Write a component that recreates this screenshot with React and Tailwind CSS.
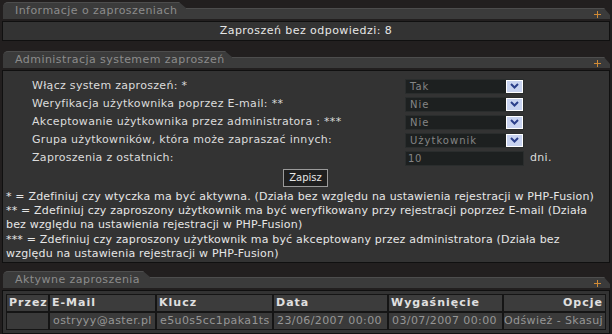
import React from "react";

function Header({ title, tabW }) {
  return (
    <div className="flex items-end h-[17px] ml-[3px] mr-[2px]">
      <div
        className="h-[17px] shrink-0 whitespace-nowrap overflow-hidden bg-[#3b3b3b] rounded-tl-[5px] border-t border-[#4d4d4d] pl-[12px] text-[11px] leading-[15px] text-[#8c8c8c] tracking-[0.45px] [clip-path:polygon(0_0,calc(100%-7px)_0,100%_6px,100%_100%,0_100%)]"
        style={{ width: tabW }}
      >
        {title}
      </div>
      <div className="flex-1 h-[11px] bg-[#3b3b3b] border-t border-[#4d4d4d] flex items-center justify-end pr-[9px] [clip-path:polygon(0_0,calc(100%-6px)_0,100%_7px,100%_100%,0_100%)]">
        <svg width="7" height="7" viewBox="0 0 7 7">
          <path d="M3.5 0 V7 M0 3.5 H7" stroke="#d08a35" strokeWidth="1" />
        </svg>
      </div>
    </div>
  );
}

function Select({ value }) {
  return (
    <div className="flex h-[15px] w-[119px] bg-[#1d2020] border border-[#2a2d2d]">
      <div className="flex-1 text-[10px] leading-[13px] pl-[4px] text-[#858585] tracking-[1px]">{value}</div>
      <div className="w-[17px] h-[13px] bg-[#c8d3f0] border border-white flex items-center justify-center">
        <svg width="9" height="6" viewBox="0 0 9 6">
          <path d="M1 1 L4.5 4.5 L8 1" stroke="#2b3f8a" strokeWidth="2" fill="none" />
        </svg>
      </div>
    </div>
  );
}

function Row({ label, children }) {
  return (
    <div className="flex items-center h-[18px]">
      <div className="w-[402px] pl-[29px] text-[#dcdcdc] whitespace-nowrap">{label}</div>
      {children}
    </div>
  );
}

export default function App() {
  const cols = [
    ["Przez", "", "w-[41px]"],
    ["E-Mail", "ostryyy@aster.pl", "w-[105px]"],
    ["Klucz", "e5u0s5cc1paka1ts", "w-[115px]"],
    ["Data", "23/06/2007 00:00", "w-[113px]"],
    ["Wygaśnięcie", "03/07/2007 00:00", "w-[113px]"],
  ];
  return (
    <div className="w-[612px] h-[334px] bg-[#221f1f] font-['DejaVu_Sans',sans-serif] text-[11px] leading-[14px] tracking-[0.3px] overflow-hidden pt-[2px]">
      <Header title="Informacje o zaproszeniach" tabW={183} />
      <div className="mt-[2px] mx-[2px] h-[20px] bg-[#333333] border border-[#101010] flex items-center justify-center text-[#e6e6e6] tracking-[0.45px]">
        Zaproszeń bez odpowiedzi: 8
      </div>

      <div className="mt-[10px]">
        <Header title="Administracja systemem zaproszeń" tabW={229} />
      </div>
      <div className="mt-[2px] mx-[2px] bg-[#333333] border border-[#101010] pt-[6px] pb-[1px]">
        <Row label="Włącz system zaproszeń: *"><Select value="Tak" /></Row>
        <Row label="Weryfikacja użytkownika poprzez E-mail: **"><Select value="Nie" /></Row>
        <Row label="Akceptowanie użytkownika przez administratora : ***"><Select value="Nie" /></Row>
        <Row label="Grupa użytkowników, która może zapraszać innych:"><Select value="Użytkownik" /></Row>
        <Row label="Zaproszenia z ostatnich:">
          <div className="h-[15px] w-[119px] bg-[#1d2020] border border-[#2a2d2d] text-[10px] leading-[13px] pl-[2px] text-[#858585] tracking-[0.6px]">10</div>
          <span className="ml-[6px] text-[#dcdcdc]">dni.</span>
        </Row>
        <div className="flex justify-center mt-[2px] pr-[1px]">
          <div className="h-[18px] px-[5px] bg-[#1f1f1f] border border-[#9a9a9a] text-[10px] leading-[16px] text-[#e6e6e6] tracking-[0px]">Zapisz</div>
        </div>
        <div className="mt-[3px] px-[3px] text-[#e6e6e6] leading-[14.2px] tracking-[0.18px] whitespace-nowrap">
          <div>* = Zdefiniuj czy wtyczka ma być aktywna. (Działa bez względu na ustawienia rejestracji w PHP-Fusion)</div>
          <div>** = Zdefiniuj czy zaproszony użytkownik ma być weryfikowany przy rejestracji poprzez E-mail (Działa</div>
          <div>bez względu na ustawienia rejestracji w PHP-Fusion)</div>
          <div>*** = Zdefiniuj czy zaproszony użytkownik ma być akceptowany przez administratora (Działa bez</div>
          <div>względu na ustawienia rejestracji w PHP-Fusion)</div>
        </div>
      </div>

      <div className="mt-[8px]">
        <Header title="Aktywne zaproszenia" tabW={147} />
      </div>
      <div className="mt-[2px] mx-[2px] bg-[#333333] border border-[#101010] p-[3px]">
        <div className="flex flex-col gap-[2px] bg-[#151515] border border-[#151515]">
          <div className="flex gap-[2px]">
            {cols.map(([h, , w]) => (
              <div key={h} className={`${w} h-[16px] bg-[#3c3c3c] pl-[2px] font-bold text-[#e0e0e0] leading-[16px] tracking-[1px]`}>{h}</div>
            ))}
            <div className="flex-1 h-[16px] bg-[#3c3c3c] pr-[2px] font-bold text-[#e0e0e0] leading-[16px] text-right tracking-[1px]">Opcje</div>
          </div>
          <div className="flex gap-[2px]">
            {cols.map(([h, d, w]) => (
              <div key={h} className={`${w} h-[16px] bg-[#3a3a3a] pl-[3px] text-[#969696] leading-[16px] tracking-[0.4px]`}>{d}</div>
            ))}
            <div className="flex-1 h-[16px] bg-[#3a3a3a] pr-[2px] text-[#969696] leading-[16px] text-right tracking-[0.4px]">Odśwież - Skasuj</div>
          </div>
        </div>
      </div>
    </div>
  );
}
